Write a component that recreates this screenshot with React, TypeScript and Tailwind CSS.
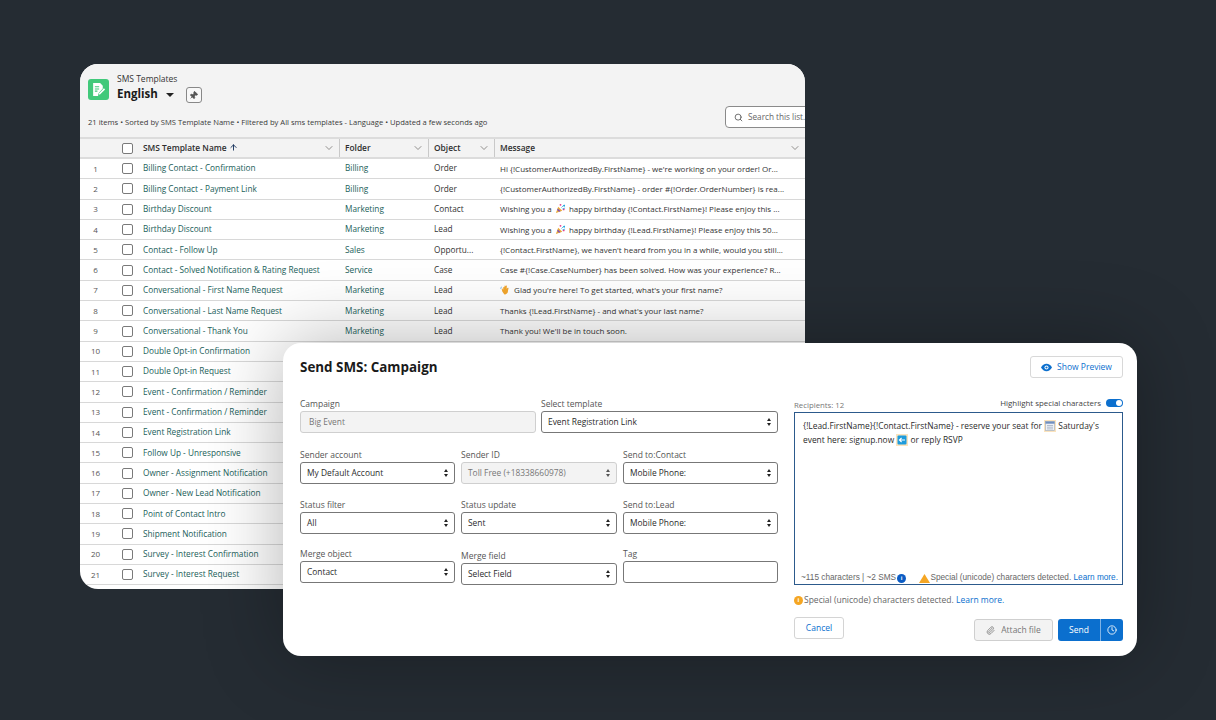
import { ArrowUp, ChevronDown, Paperclip, Pin, Search, Clock } from "lucide-react";

type Row = { name: string; folder: string; object: string; message: React.ReactNode };

function Party() {
  return (
    <svg viewBox="0 0 12 12" className="mx-[1px] inline-block size-[11px] align-[-2px]">
      <path d="M1 11 3.5 4l4.5 4.5z" fill="#e8a93a" />
      <path d="M3 6l3 3-1.5.6L2.4 7.6z" fill="#7a4bc2" />
      <circle cx="6" cy="2" r="1" fill="#e8378c" />
      <circle cx="10" cy="3" r="1" fill="#27a6e0" />
      <circle cx="9.5" cy="7" r="1" fill="#e8378c" />
      <path d="M7 5l3-3M8 6.5l3-1" stroke="#27a6e0" strokeWidth=".8" />
    </svg>
  );
}

function Wave() {
  return (
    <svg viewBox="0 0 12 12" className="mr-[1px] inline-block size-[11px] align-[-2px]">
      <path d="M1 5.5c-.3-1 .1-2 1-2.5" stroke="#5aa7e0" strokeWidth=".8" fill="none" />
      <path d="M4.6 11.2 2.5 8.2 1.9 5.7c-.1-.7.8-.9 1-.3l.5 1.2.2-2.9c.1-.7 1-.7 1.1 0l.3-1.5c.2-.7 1.1-.5 1.1.2l.4-.6c.4-.5 1.1-.2 1 .4l-.3 3 1.2-1c.5-.4 1.2.2.8.7L8.4 9.4c-.9 1.6-2.6 2.5-3.8 1.8z" fill="#f2a62d" />
    </svg>
  );
}

function HighlightCalendar() {
  return (
    <svg viewBox="0 0 12 12" className="inline-block size-[12px] align-[-3px]">
      <rect width="12" height="12" fill="#fbe3bd" />
      <rect x="1.5" y="1.5" width="9" height="9" fill="#eef1f6" stroke="#9aa8bd" strokeWidth=".6" />
      <rect x="1.5" y="1.5" width="9" height="2.2" fill="#6f8fc0" />
      <path d="M3 5.5h6M3 7.2h6M3 8.9h6" stroke="#9aa8bd" strokeWidth=".7" />
    </svg>
  );
}

function HighlightArrow() {
  return (
    <svg viewBox="0 0 12 12" className="inline-block size-[12px] align-[-3px]">
      <rect width="12" height="12" fill="#fbe3bd" />
      <rect x="1.5" y="1.5" width="9" height="9" rx="1" fill="#1d9bdc" />
      <path d="M9 6H4M5.6 4 3.4 6l2.2 2" stroke="#fff" strokeWidth="1.1" fill="none" />
    </svg>
  );
}

const rows: Row[] = [
  { name: "Billing Contact - Confirmation", folder: "Billing", object: "Order", message: "Hi {!CustomerAuthorizedBy.FirstName} - we're working on your order! Or..." },
  { name: "Billing Contact - Payment Link", folder: "Billing", object: "Order", message: "{!CustomerAuthorizedBy.FirstName} - order #{!Order.OrderNumber} is rea..." },
  { name: "Birthday Discount", folder: "Marketing", object: "Contact", message: <>Wishing you a <Party /> happy birthday {"{!Contact.FirstName}"}! Please enjoy this ...</> },
  { name: "Birthday Discount", folder: "Marketing", object: "Lead", message: <>Wishing you a <Party /> happy birthday {"{!Lead.FirstName}"}! Please enjoy this 50...</> },
  { name: "Contact - Follow Up", folder: "Sales", object: "Opportu...", message: "{!Contact.FirstName}, we haven't heard from you in a while, would you still..." },
  { name: "Contact - Solved Notification & Rating Request", folder: "Service", object: "Case", message: "Case #{!Case.CaseNumber} has been solved. How was your experience? R..." },
  { name: "Conversational - First Name Request", folder: "Marketing", object: "Lead", message: <><Wave /> Glad you're here! To get started, what's your first name?</> },
  { name: "Conversational - Last Name Request", folder: "Marketing", object: "Lead", message: "Thanks {!Lead.FirstName} - and what's your last name?" },
  { name: "Conversational - Thank You", folder: "Marketing", object: "Lead", message: "Thank you! We'll be in touch soon." },
  { name: "Double Opt-in Confirmation", folder: "", object: "", message: "" },
  { name: "Double Opt-in Request", folder: "", object: "", message: "" },
  { name: "Event - Confirmation / Reminder", folder: "", object: "", message: "" },
  { name: "Event - Confirmation / Reminder", folder: "", object: "", message: "" },
  { name: "Event Registration Link", folder: "", object: "", message: "" },
  { name: "Follow Up - Unresponsive", folder: "", object: "", message: "" },
  { name: "Owner - Assignment Notification", folder: "", object: "", message: "" },
  { name: "Owner - New Lead Notification", folder: "", object: "", message: "" },
  { name: "Point of Contact Intro", folder: "", object: "", message: "" },
  { name: "Shipment Notification", folder: "", object: "", message: "" },
  { name: "Survey - Interest Confirmation", folder: "", object: "", message: "" },
  { name: "Survey - Interest Request", folder: "", object: "", message: "" },
];

function HeaderCell({ label, width, sort }: { label: string; width: string; sort?: boolean }) {
  return (
    <div className={`${width} flex h-full items-center justify-between border-r border-[#c9c9c9] pl-[5px] pr-[4px] last:border-r-0`}>
      <span className="flex items-center gap-[2px] font-semibold text-[#2e2e2e]">
        {label}
        {sort && <ArrowUp className="size-[9px] text-[#16325c]" strokeWidth={2.5} />}
      </span>
      <ChevronDown className="size-[12px] text-[#706e6b]" strokeWidth={1.5} />
    </div>
  );
}

function Checkbox() {
  return <span className="size-[11px] shrink-0 rounded-[2px] border border-[#7a7a7a] bg-white" />;
}

function TemplatesCard() {
  return (
    <div className="absolute left-[80px] top-[64px] flex h-[525px] w-[725px] flex-col overflow-hidden rounded-[18px] bg-white">
      <div className="relative h-[73px] shrink-0 bg-[#f3f3f3]">
        <div className="flex items-start pl-[8px] pt-[15px]">
          <span className="flex size-[21px] items-center justify-center rounded-[3px] bg-[#41c97a]">
            <svg viewBox="0 0 14 14" className="size-[15px]">
              <path d="M2 1h6.5L11 3.5V6L7 10.5 6.6 13H2z" fill="#fff" />
              <path d="M3.6 4.5h4M3.6 6.5h4M3.6 8.5h2.4" stroke="#41c97a" strokeWidth="1" />
              <path d="M7.6 11.4 12.6 6.4" stroke="#fff" strokeWidth="1.5" />
            </svg>
          </span>
          <div className="-mt-[6px] ml-[8px]">
            <div className="text-[8.5px] leading-[12px] text-[#333]">SMS Templates</div>
            <div className="flex items-center text-[11.5px] font-bold leading-[16px] text-[#1a1a1a]">
              English
              <span className="ml-[8px] mt-[1px] h-0 w-0 border-x-[4px] border-t-[4.5px] border-x-transparent border-t-[#222]" />
              <span className="ml-[12px] mt-[2px] flex size-[16px] items-center justify-center rounded-[3px] border border-[#888] bg-[#f8f8f8]">
                <Pin className="size-[9px] rotate-45 fill-[#555] text-[#555]" />
              </span>
            </div>
          </div>
        </div>
        <div className="absolute left-[8px] top-[52px] whitespace-nowrap text-[7.6px] leading-[12px] text-[#3a3a3a]">
          21 items • Sorted by SMS Template Name • Filtered by All sms templates - Language • Updated a few seconds ago
        </div>
        <div className="absolute left-[645px] top-[42px] flex h-[22px] w-[90px] items-center gap-[5px] rounded-[4px] border border-[#8a8a8a] bg-white pl-[8px] text-[8.2px] text-[#666]">
          <Search className="size-[9px] text-[#555]" strokeWidth={2.2} />
          Search this list...
        </div>
      </div>
      <div className="flex h-[22px] shrink-0 items-center border-y-2 border-[#dcdcdc] bg-[#f3f3f3] text-[8.4px]">
        <div className="flex h-full w-[58px] items-center justify-end pr-[5px]">
          <Checkbox />
        </div>
        <HeaderCell label="SMS Template Name" width="w-[202px]" sort />
        <HeaderCell label="Folder" width="w-[89px]" />
        <HeaderCell label="Object" width="w-[66px]" />
        <HeaderCell label="Message" width="flex-1" />
      </div>
      {rows.map((r, i) => (
        <div key={i} className="flex h-[20.3px] shrink-0 items-center border-b border-[#d8d8d8] text-[8.25px] text-[#333]">
          <div className="w-[31px] text-center text-[8px] text-[#555]">{i + 1}</div>
          <div className="flex w-[27px] items-center justify-start pl-[11px]"><Checkbox /></div>
          <div className="w-[202px] truncate pl-[5px] text-[#215e5a]">{r.name}</div>
          <div className="w-[89px] pl-[5px] text-[#215e5a]">{r.folder}</div>
          <div className="w-[66px] pl-[5px]">{r.object}</div>
          <div className="flex-1 truncate pl-[5px] text-[8px]">{r.message}</div>
        </div>
      ))}
    </div>
  );
}

function Spinner({ muted }: { muted?: boolean }) {
  return (
    <span className="flex flex-col gap-[2px]">
      <span className={`h-0 w-0 border-x-[2.5px] border-b-[3px] border-x-transparent ${muted ? "border-b-[#555]" : "border-b-[#222]"}`} />
      <span className={`h-0 w-0 border-x-[2.5px] border-t-[3px] border-x-transparent ${muted ? "border-t-[#555]" : "border-t-[#222]"}`} />
    </span>
  );
}

function Field({ label, value, width, disabled, select, shift }: {
  label: string;
  value?: string;
  width: string;
  disabled?: boolean;
  select?: boolean;
  shift?: boolean;
}) {
  return (
    <div className={`${width} ${shift ? "mt-[2px]" : ""}`}>
      <div className="mb-[1px] text-[8.5px] leading-[12px] text-[#555]">{label}</div>
      <div
        className={`flex h-[22px] items-center justify-between rounded-[3px] border pl-[6px] pr-[6px] text-[8.4px] ${
          disabled ? "border-[#cfcfcf] bg-[#f3f3f3] text-[#777]" : "border-[#777] bg-white text-[#2b2b2b]"
        }`}
      >
        <span className={!select && disabled ? "pl-[2px]" : ""}>{value}</span>
        {select && <Spinner muted={disabled} />}
      </div>
    </div>
  );
}

function SendModal() {
  return (
    <div className="absolute left-[283px] top-[343px] flex h-[313px] w-[854px] flex-col rounded-[18px] bg-white pl-[17px] pr-[14px] pt-[13px] shadow-[0_0_80px_rgba(0,0,0,0.3)]">
      <div className="flex items-start justify-between">
        <h1 className="pt-[1px] text-[13.4px] font-bold leading-[20px] text-[#1a1a1a]">Send SMS: Campaign</h1>
        <button className="flex h-[22px] w-[93px] items-center justify-center gap-[5px] rounded-[3px] border border-[#d8d8d8] bg-white text-[8.5px] text-[#0b6fce]">
          <svg viewBox="0 0 12 12" className="size-[11px]">
            <path d="M0 6c1.5-2.6 3.5-4 6-4s4.500 1.400 6 4c-1.500 2.600-3.500 4-6 4S1.500 8.600 0 6z" fill="#0b6fce" />
            <circle cx="6" cy="6" r="2.200" fill="#fff" />
            <circle cx="6" cy="6" r="1.200" fill="#0b6fce" />
          </svg>
          Show Preview
        </button>
      </div>
      <div className="mt-[18px] flex gap-[17px]">
        <div className="mt-[2px] flex w-[478px] flex-col">
          <div className="flex gap-[5px]">
            <Field label="Campaign" value="Big Event" width="w-[236px]" disabled />
            <Field label="Select template" value="Event Registration Link" width="w-[237px]" select />
          </div>
          <div className="mt-[16px] flex gap-[6px]">
            <Field label="Sender account" value="My Default Account" width="w-[155px]" select />
            <Field label="Sender ID" value="Toll Free (+18338660978)" width="w-[156px]" disabled select />
            <Field label="Send to:Contact" value="Mobile Phone:" width="w-[155px]" select />
          </div>
          <div className="mt-[15px] flex gap-[6px]">
            <Field label="Status filter" value="All" width="w-[155px]" select />
            <Field label="Status update" value="Sent" width="w-[156px]" select />
            <Field label="Send to:Lead" value="Mobile Phone:" width="w-[155px]" select />
          </div>
          <div className="mt-[14px] flex items-start gap-[6px]">
            <Field label="Merge object" value="Contact" width="w-[155px]" select />
            <Field label="Merge field" value="Select Field" width="w-[156px]" select shift />
            <Field label="Tag" width="w-[155px]" />
          </div>
        </div>
        <div className="-ml-[1px] w-[329px]">
          <div className="flex h-[14px] items-end justify-between">
            <span className="text-[7.8px] leading-[9px] text-[#777]">Recipients: 12</span>
            <span className="mb-[1px] flex items-center gap-[5px] text-[7.9px] leading-[12px] text-[#444]">
              Highlight special characters
              <span className="flex h-[8px] w-[17px] items-center justify-end rounded-full bg-[#0b6fce] pr-[1px]">
                <span className="size-[6px] rounded-full bg-white" />
              </span>
            </span>
          </div>
          <div className="mt-[2px] flex h-[173px] flex-col justify-between border border-[#2c5a8c] pl-[8px] pr-[3px] pt-[6px] text-[8.4px]">
            <p className="leading-[14px] text-[#2b2b2b]">
              {"{!Lead.FirstName}{!Contact.FirstName}"} - reserve your seat for <HighlightCalendar /> Saturday's event here: signup.now <HighlightArrow /> or reply RSVP
            </p>
            <div className="-ml-[2px] flex items-center justify-between pr-[1px] font-['Liberation_Sans',sans-serif] text-[8.25px] leading-[12px] text-[#666]">
              <span className="flex items-center gap-[1px]">
                ~115 characters | ~2 SMS
                <span className="flex size-[9px] items-center justify-center rounded-full bg-[#0b5cc4] text-[6px] font-bold text-white">i</span>
              </span>
              <span className="flex items-center">
                <svg viewBox="0 0 11 9" className="h-[9px] w-[11px]"><path d="M5.500 0 11 9H0z" fill="#f5a623" /></svg>
                Special (unicode) characters detected.&nbsp;<span className="text-[#0b6fce]">Learn more.</span>
              </span>
            </div>
          </div>
          <div className="mt-[9px] flex items-center text-[8.5px] leading-[12px] text-[#666]">
            <span className="mr-[1px] flex size-[9px] items-center justify-center rounded-full bg-[#f5a623] text-[6px] font-bold text-white">i</span>
            Special (unicode) characters detected.&nbsp;<span className="text-[#0b6fce]">Learn more.</span>
          </div>
          <div className="mt-[11px] flex items-start justify-between">
            <button className="h-[22px] w-[50px] rounded-[3px] border border-[#d4d4d4] bg-white text-[8.5px] text-[#0b6fce]">Cancel</button>
            <div className="mt-[2px] flex gap-[5px]">
              <button className="flex h-[22px] w-[79px] items-center justify-center gap-[6px] rounded-[3px] border border-[#cfcfcf] bg-[#f3f3f3] text-[8.5px] text-[#777]">
                <Paperclip className="size-[9px]" />
                Attach file
              </button>
              <div className="flex h-[22px] w-[65px] rounded-[3px] bg-[#0b6fce] text-[8.5px] text-white">
                <span className="flex w-[43px] items-center justify-center border-r border-[#7fb3e6]">Send</span>
                <span className="flex flex-1 items-center justify-center">
                  <Clock className="size-[10px]" strokeWidth={2} />
                </span>
              </div>
            </div>
          </div>
        </div>
      </div>
    </div>
  );
}

export default function App() {
  return (
    <div className="relative h-[720px] w-[1216px] overflow-hidden bg-[#252c33] font-['Open_Sans','Noto_Sans',sans-serif]">
      <TemplatesCard />
      <SendModal />
    </div>
  );
}
